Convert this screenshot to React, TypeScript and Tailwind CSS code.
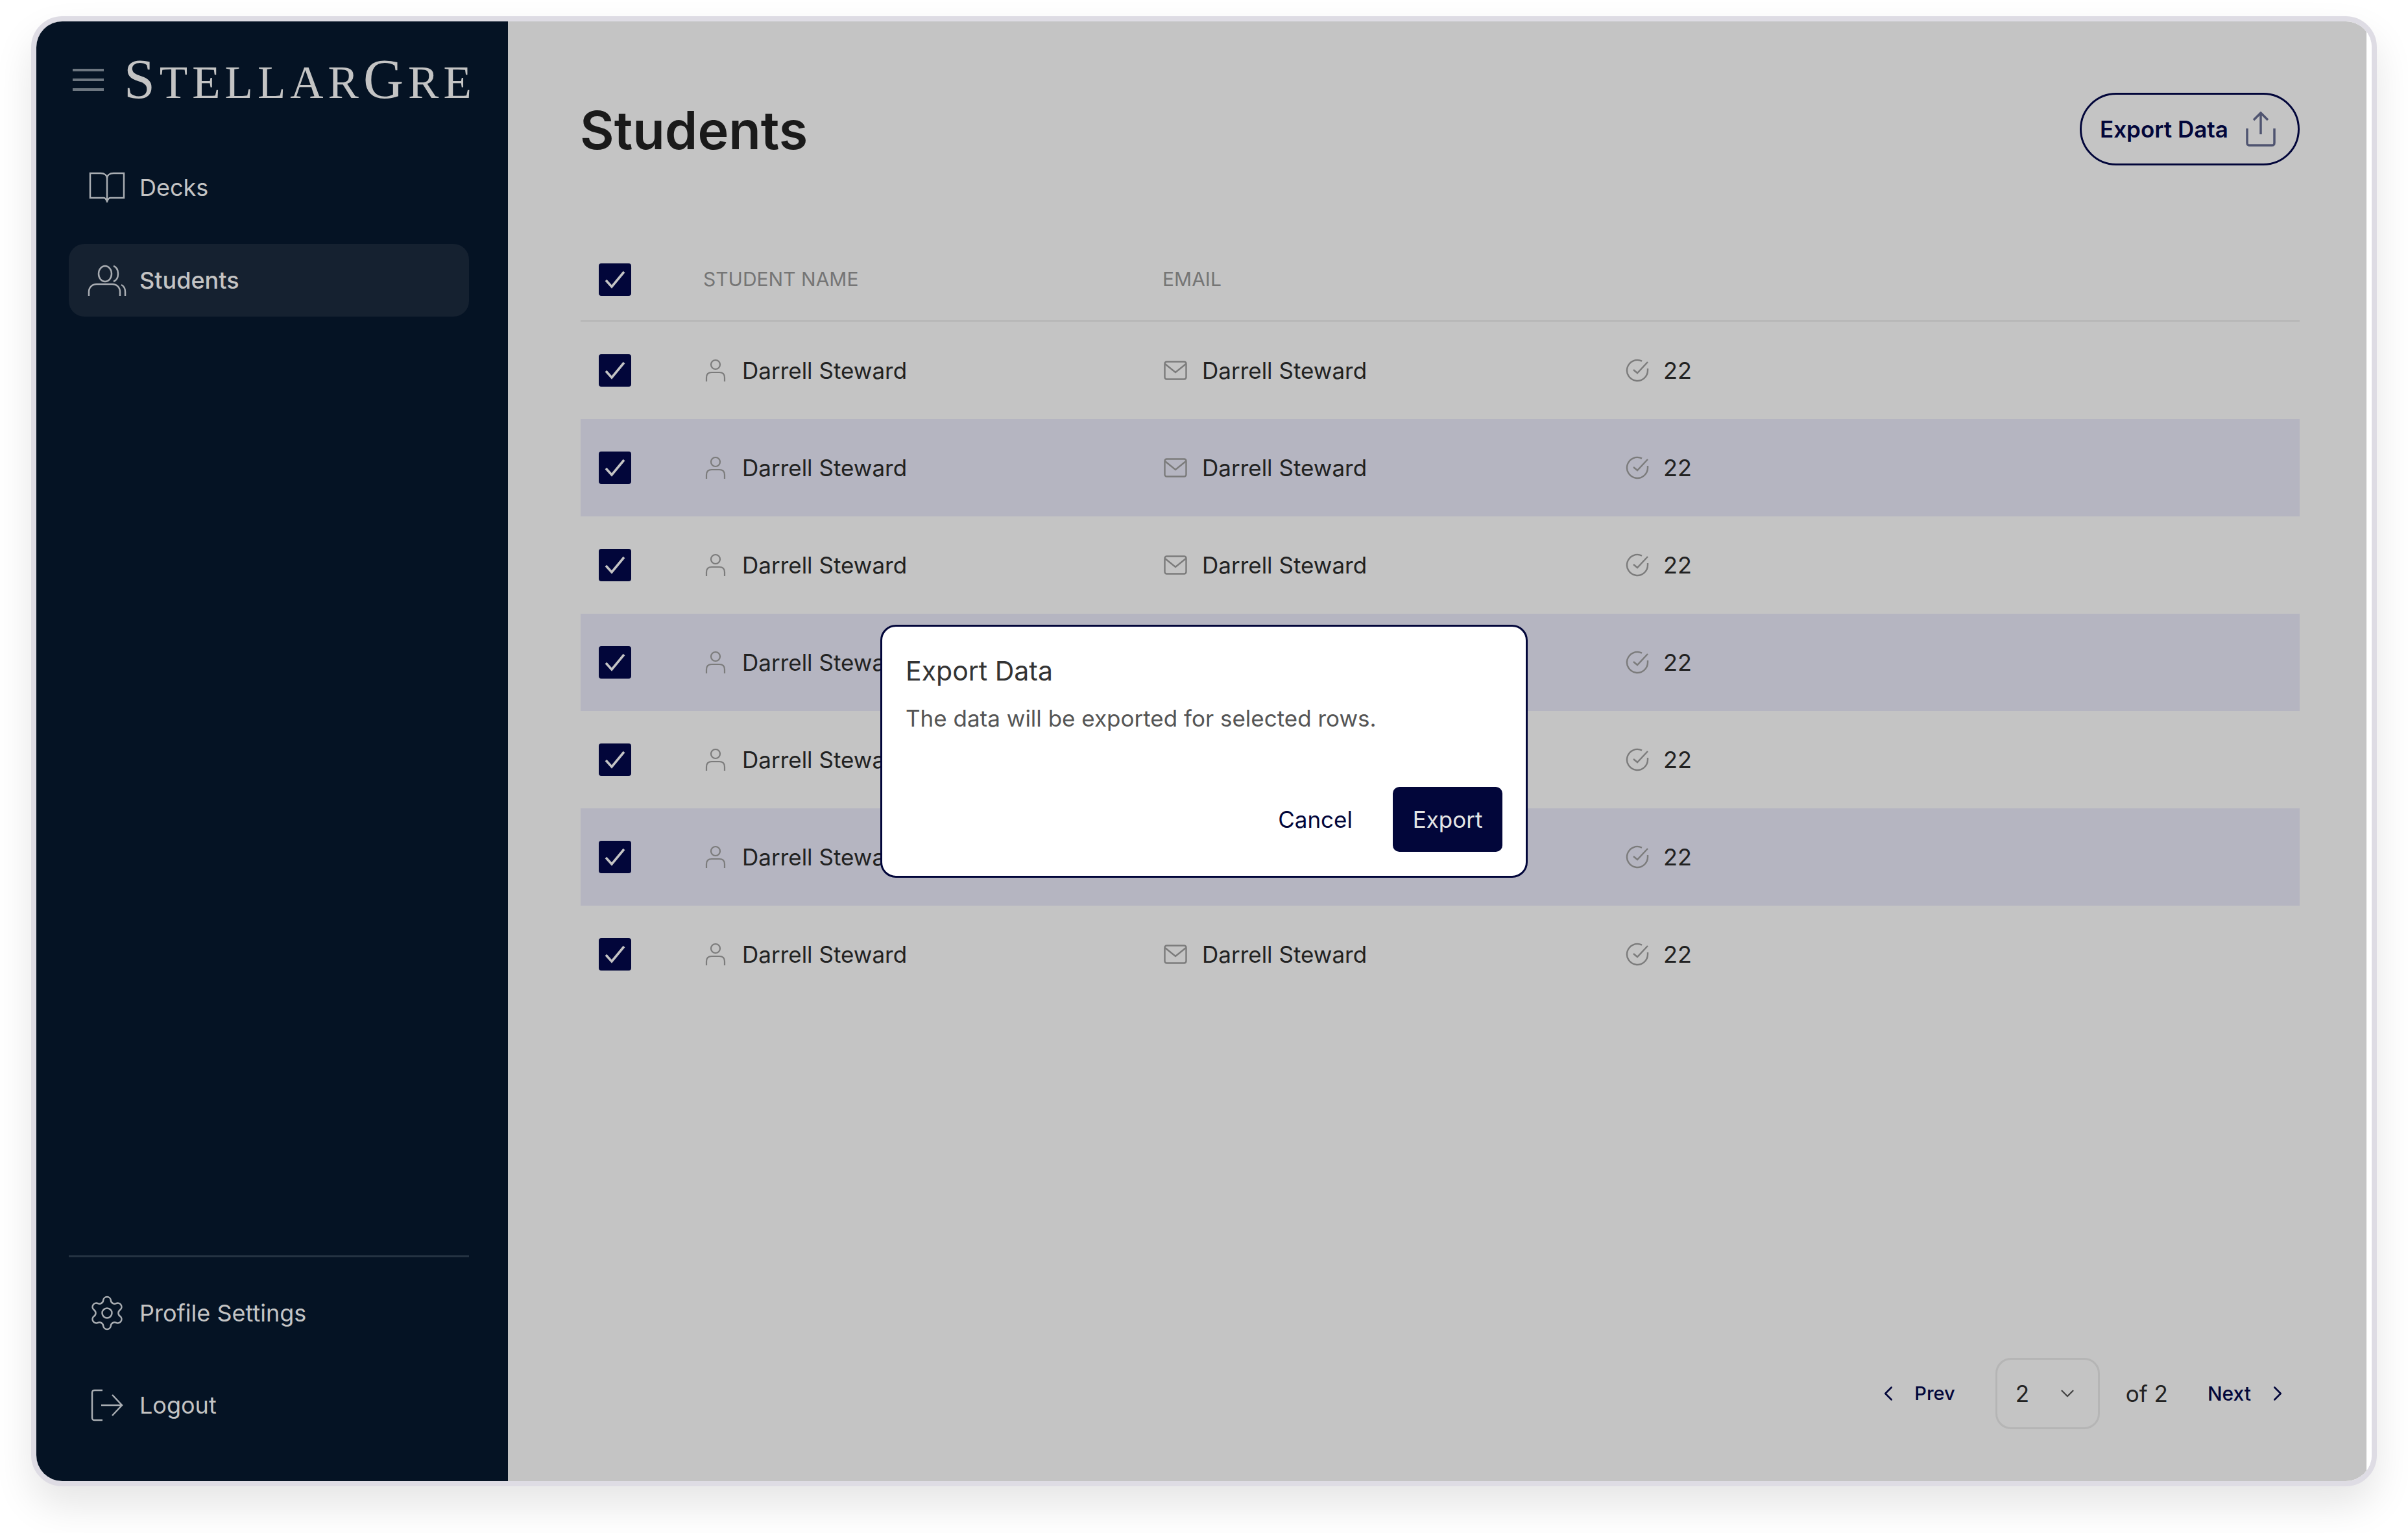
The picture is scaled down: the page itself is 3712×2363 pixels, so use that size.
import React from "react";
import { ChevronDown, ChevronLeft, ChevronRight, Settings } from "lucide-react";

const BookIcon = () => (
  <svg width="56" height="48" viewBox="0 0 56 48" fill="none" stroke="currentColor" strokeWidth="2.5">
    <path d="M2 2h16c6 0 10 3 10 8 0-5 4-8 10-8h16v38H33c-2 0-3 1-5 5-2-4-3-5-5-5H2z" />
    <path d="M28 10v37" />
  </svg>
);

const UsersIcon = () => (
  <svg width="60" height="50" viewBox="0 0 60 50" fill="none" stroke="currentColor" strokeWidth="2.5">
    <ellipse cx="27" cy="15" rx="10" ry="12" />
    <path d="M40 3c5 2 7 6 7 12s-2 10-7 12" />
    <path d="M2 49v-6c0-7 5-12 12-12h24c7 0 12 5 12 12v6" />
    <path d="M52 32c4 2 6 6 6 11v6" />
  </svg>
);

const LogoutIcon = () => (
  <svg width="50" height="50" viewBox="0 0 50 50" fill="none" stroke="currentColor" strokeWidth="2.5">
    <path d="M18 2H6C3 2 2 3 2 6v38c0 3 1 4 4 4h12" />
    <path d="M16 25h32M33 9l15 16-15 16" />
  </svg>
);

const PersonIcon = () => (
  <svg width="32" height="36" viewBox="0 0 32 36" fill="none" stroke="currentColor" strokeWidth="2.2">
    <circle cx="16" cy="9" r="7" />
    <path d="M2 35v-6c0-5 3-8 8-8h12c5 0 8 3 8 8v6" />
  </svg>
);

const MailIcon = () => (
  <svg width="36" height="30" viewBox="0 0 36 30" fill="none" stroke="currentColor" strokeWidth="2.4">
    <rect x="1.5" y="1.5" width="33" height="27" rx="3" />
    <path d="M2 5l16 13L34 5" />
  </svg>
);

const CheckCircleIcon = () => (
  <svg width="36" height="36" viewBox="0 0 36 36" fill="none" stroke="currentColor" strokeWidth="2.4">
    <path d="M34 15v3a16 16 0 1 1-9-14.4" />
    <path d="M12 17l6 5L34 5" />
  </svg>
);

const UploadIcon = () => (
  <svg width="46" height="54" viewBox="0 0 46 54" fill="none" stroke="currentColor" strokeWidth="3.5">
    <path d="M2 26v22c0 3 1 4 4 4h34c3 0 4-1 4-4V26" />
    <path d="M23 35V3M12 13L23 2l11 11" />
  </svg>
);

const Check = () => (
  <div className="w-[50px] h-[50px] rounded-[4px] bg-[#02063a] flex items-center justify-center">
    <svg width="32" height="28" viewBox="0 0 32 28" fill="none" stroke="#c4c4c4" strokeWidth="3.6">
      <path d="M2 15l9 10L30 2" />
    </svg>
  </div>
);

const NavItem = ({ icon, label, active }: { icon: React.ReactNode; label: string; active?: boolean }) => (
  <div className={`h-[112px] rounded-[24px] pl-[29px] flex items-center ${active ? "bg-[#152130] font-medium" : ""}`}>
    <div className="w-[60px] flex justify-center text-[#a9adb2]">{icon}</div>
    <span className="ml-[20px] text-[36px] text-[#c4c4c4]">{label}</span>
  </div>
);

const rows = [0, 1, 2, 3, 4, 5, 6];

export default function App() {
  return (
    <div className="w-[3712px] h-[2363px] bg-white pt-[25px] pl-[48px] font-['Inter',sans-serif] overflow-hidden">
      <div className="relative w-[3616px] h-[2266px] border-8 border-[#dedce4] rounded-[48px] overflow-hidden bg-white flex shadow-[0_30px_60px_rgba(0,0,0,0.1)]">
        {/* sidebar */}
        <aside className="w-[727px] bg-[#051324] pl-[50px] pr-[60px] pb-[61px] flex flex-col shrink-0">
          <div className="h-[180px] flex items-center">
            <svg width="48" height="34" viewBox="0 0 48 34" className="ml-[6px] shrink-0" stroke="#6d7680" strokeWidth="4">
              <path d="M0 2h48M0 17h48M0 32h48" />
            </svg>
            <div className="ml-[31px] -mt-[2px] font-['Liberation_Serif',serif] text-[#c4c4c4] leading-none tracking-[7px] whitespace-nowrap flex items-baseline">
              <span className="text-[86px]">S</span>
              <span className="text-[71px]">TELLAR</span>
              <span className="text-[86px]">G</span>
              <span className="text-[71px]">RE</span>
            </div>
          </div>
          <nav className="mt-[20px] flex flex-col gap-[31px]">
            <NavItem icon={<BookIcon />} label="Decks" />
            <NavItem icon={<UsersIcon />} label="Students" active />
          </nav>
          <div className="mt-auto border-t-[3px] border-[#253342] pt-[30px] flex flex-col gap-[30px]">
            <NavItem icon={<Settings size={64} strokeWidth={1} />} label="Profile Settings" />
            <NavItem icon={<LogoutIcon />} label="Logout" />
          </div>
        </aside>

        {/* main */}
        <main className="flex-1 pr-[8px] bg-white">
          <div className="h-full bg-[#c4c4c4] pl-[112px] pr-[103px] pt-[110px] pb-[80px] flex flex-col">
            <div className="h-[112px] flex items-center justify-between">
              <h1 className="text-[81px] font-semibold text-[#1a1a1a] -ml-[1px] mt-[5px]">Students</h1>
              <button className="w-[339px] h-[112px] rounded-full border-[3px] border-[#02063a] flex items-center pl-[28px] text-[#02063a]">
                <span className="text-[35px] font-semibold whitespace-nowrap">Export Data</span>
                <span className="ml-[27px] text-[#4f5470]"><UploadIcon /></span>
              </button>
            </div>

            <div className="mt-[113px] h-[128px] border-b-[3px] border-[#b8b8b8] grid grid-cols-[189px_708px_1fr] items-center">
              <div className="pl-[28px]"><Check /></div>
              <span className="text-[30px] text-[#757575]">STUDENT NAME</span>
              <span className="text-[30px] text-[#757575]">EMAIL</span>
            </div>

            {rows.map((r) => (
              <div
                key={r}
                className={`h-[150px] grid grid-cols-[189px_708px_714px_1fr] items-center ${r % 2 === 1 ? "bg-[#b5b5c1]" : ""}`}
              >
                <div className="pl-[28px]"><Check /></div>
                <div className="flex items-center">
                  <span className="w-[60px] pl-[3px] text-[#7b7b7b]"><PersonIcon /></span>
                  <span className="text-[35px] text-[#222]">Darrell Steward</span>
                </div>
                <div className="flex items-center">
                  <span className="w-[61px] pl-[2px] text-[#7b7b7b]"><MailIcon /></span>
                  <span className="text-[35px] text-[#222]">Darrell Steward</span>
                </div>
                <div className="flex items-center">
                  <span className="w-[58px] text-[#7b7b7b]"><CheckCircleIcon /></span>
                  <span className="text-[36px] text-[#222]">22</span>
                </div>
              </div>
            ))}

            <div className="mt-auto flex items-center justify-end pr-[15px] text-[#02063a]">
              <ChevronLeft size={38} strokeWidth={1.6} />
              <span className="ml-[21px] text-[29px] font-medium">Prev</span>
              <div className="ml-[62px] w-[161px] h-[110px] rounded-[24px] border-[3px] border-[#b5b5b5] flex items-center justify-between pl-[28px] pr-[30px] text-[#222]">
                <span className="text-[35px]">2</span>
                <ChevronDown size={34} strokeWidth={1.6} className="text-[#444]" />
              </div>
              <span className="ml-[40px] text-[35px] text-[#222]">of 2</span>
              <span className="ml-[61px] text-[30px] font-medium">Next</span>
              <ChevronRight size={38} strokeWidth={1.6} className="ml-[22px]" />
            </div>
          </div>
        </main>

        {/* dialog */}
        <div className="absolute inset-0 flex items-center justify-center">
          <div className="w-[998px] h-[390px] bg-white border-[3px] border-[#02063a] rounded-[24px] pt-[43px] px-[36px] pb-[37px] flex flex-col">
            <h2 className="text-[41px] leading-[50px] text-[#333]">Export Data</h2>
            <p className="mt-[24px] text-[35px] leading-[48px] text-[#555]">The data will be exported for selected rows.</p>
            <div className="mt-auto flex items-center justify-end">
              <button className="text-[35px] text-[#02063a]">Cancel</button>
              <button className="ml-[62px] w-[169px] h-[100px] rounded-[10px] bg-[#02063a] text-[35px] text-[#e5e5e5]">Export</button>
            </div>
          </div>
        </div>
      </div>
    </div>
  );
}
